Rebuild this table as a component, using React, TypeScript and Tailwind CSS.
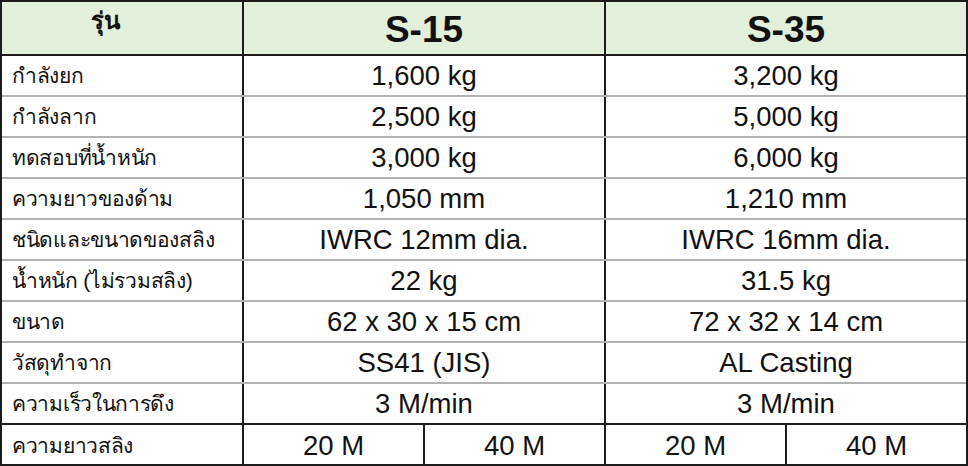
const rows: [string, string, string][] = [
  ["กำลังยก", "1,600 kg", "3,200 kg"],
  ["กำลังลาก", "2,500 kg", "5,000 kg"],
  ["ทดสอบที่น้ำหนัก", "3,000 kg", "6,000 kg"],
  ["ความยาวของด้าม", "1,050 mm", "1,210 mm"],
  ["ชนิดและขนาดของสลิง", "IWRC 12mm dia.", "IWRC 16mm dia."],
  ["น้ำหนัก (ไม่รวมสลิง)", "22 kg", "31.5 kg"],
  ["ขนาด", "62 x 30 x 15 cm", "72 x 32 x 14 cm"],
  ["วัสดุทำจาก", "SS41 (JIS)", "AL Casting"],
  ["ความเร็วในการดึง", "3 M/min", "3 M/min"],
];

function Row({ label, a, b, last }: { label: string; a: string; b: string; last: boolean }) {
  return (
    <div
      className={`flex h-[41px] border-b-2 ${last ? "border-[#1c1c1c]" : "border-[#b3b3b3]"}`}
    >
      <div className="w-[242px] shrink-0 border-r-2 border-[#1c1c1c] pl-[10px] flex items-center text-[21px] tracking-[-0.3px]">
        {label}
      </div>
      <div className="w-[362px] shrink-0 border-r-2 border-[#1c1c1c] flex items-center justify-center text-[27.5px]">
        {a}
      </div>
      <div className="flex-1 flex items-center justify-center text-[27.5px]">{b}</div>
    </div>
  );
}

export default function App() {
  return (
    <div
      className="w-[968px] h-[466px] bg-white text-[#111] border-2 border-[#1c1c1c] flex flex-col"
      style={{ fontFamily: '"Liberation Sans", Arial, sans-serif' }}
    >
      <div className="flex h-[54px] bg-[#e2efda] border-b-2 border-[#1c1c1c] font-bold">
        <div className="w-[242px] shrink-0 border-r-2 border-[#1c1c1c] flex items-center justify-center pr-[34px] pb-[14px] text-[24px]">
          รุ่น
        </div>
        <div className="w-[362px] shrink-0 border-r-2 border-[#1c1c1c] flex items-center justify-center pt-[4px] text-[37px]">
          S-15
        </div>
        <div className="flex-1 flex items-center justify-center pt-[4px] text-[37px]">S-35</div>
      </div>

      {rows.map(([label, a, b], i) => (
        <Row key={label} label={label} a={a} b={b} last={i === rows.length - 1} />
      ))}

      <div className="flex flex-1">
        <div className="w-[242px] shrink-0 border-r-2 border-[#1c1c1c] pl-[10px] flex items-center text-[21px] tracking-[-0.3px]">
          ความยาวสลิง
        </div>
        <div className="w-[181px] shrink-0 border-r-2 border-[#1c1c1c] flex items-center justify-center text-[27.5px]">
          20 M
        </div>
        <div className="w-[181px] shrink-0 border-r-2 border-[#1c1c1c] flex items-center justify-center text-[27.5px]">
          40 M
        </div>
        <div className="w-[181px] shrink-0 border-r-2 border-[#1c1c1c] flex items-center justify-center text-[27.5px]">
          20 M
        </div>
        <div className="flex-1 flex items-center justify-center text-[27.5px]">40 M</div>
      </div>
    </div>
  );
}
